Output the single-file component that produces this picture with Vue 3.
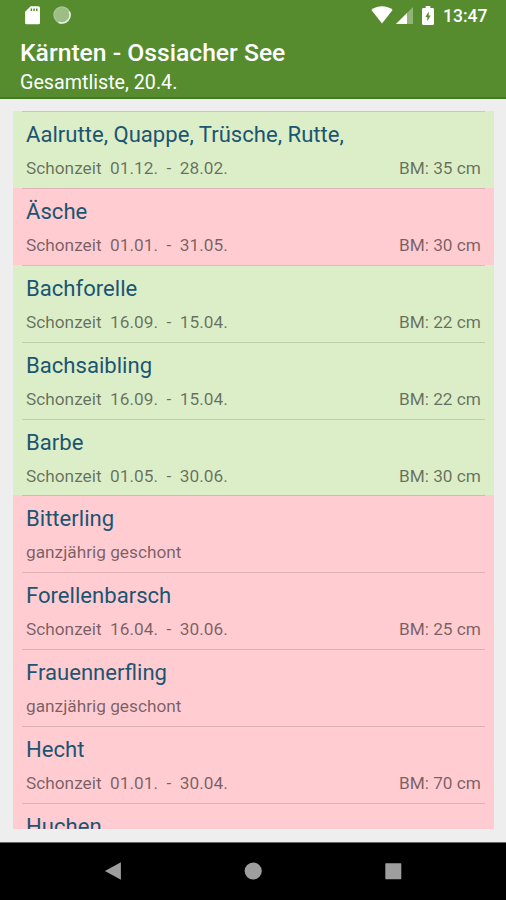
<script setup>
const fish = [
  { name: 'Aalrutte, Quappe, Trüsche, Rutte,', from: '01.12.', to: '28.02.', size: 35, open: true },
  { name: 'Äsche', from: '01.01.', to: '31.05.', size: 30, open: false },
  { name: 'Bachforelle', from: '16.09.', to: '15.04.', size: 22, open: true },
  { name: 'Bachsaibling', from: '16.09.', to: '15.04.', size: 22, open: true },
  { name: 'Barbe', from: '01.05.', to: '30.06.', size: 30, open: true },
  { name: 'Bitterling', note: 'ganzjährig geschont', open: false },
  { name: 'Forellenbarsch', from: '16.04.', to: '30.06.', size: 25, open: false },
  { name: 'Frauennerfling', note: 'ganzjährig geschont', open: false },
  { name: 'Hecht', from: '01.01.', to: '30.04.', size: 70, open: false },
  { name: 'Huchen', open: false },
]
</script>

<template>
  <div class="screen">
    <header class="top">
      <div class="status">
        <svg class="sd" width="15" height="19" viewBox="0 0 15 19">
          <path fill="#fff" fill-rule="evenodd" d="M5.6.3H13.4Q15 .3 15 1.9V16.7Q15 18.3 13.4 18.3H1.7Q.1 18.3 .1 16.7V5.8ZM5.6 2.600V5H7.1V2.600ZM8.3 2.600V5H9.8V2.600ZM11 2.600V5H12.5V2.600Z" />
        </svg>
        <svg class="disc" width="18" height="18" viewBox="0 0 18 18">
          <circle cx="9" cy="9" r="8" fill="#9cbd83" stroke="#a9c695" stroke-width="1.4" />
          <path d="M16.2 5.6A8 8 0 0 1 5.6 16.2" fill="none" stroke="#e6efdf" stroke-width="1.6" />
        </svg>
        <span class="gap"></span>
        <svg class="wifi" width="22" height="18" viewBox="0 0 22 18">
          <path fill="#fff" d="M11 17.4L.4 3.9C3.2 1.5 7 .2 11 .2S18.8 1.5 21.6 3.9Z" />
        </svg>
        <svg class="cell" width="18" height="17" viewBox="0 0 18 17">
          <path fill="#fff" fill-opacity=".35" d="M17 0V17H0Z" />
          <path fill="#fff" d="M11 6V17H0Z" />
        </svg>
        <svg class="battery" width="12" height="19" viewBox="0 0 12 19">
          <path fill="#fff" fill-rule="evenodd" d="M3.7 0H8.3V2H10.6Q12 2 12 3.4V17.5Q12 19 10.6 19H1.4Q0 19 0 17.5V3.4Q0 2 1.4 2H3.7ZM6.7 5.5L3.4 11.1H5.3V15.2L8.6 9.6H6.7Z" />
        </svg>
        <span class="clock">13:47</span>
      </div>
      <h1>Kärnten - Ossiacher See</h1>
      <p class="subtitle">Gesamtliste, 20.4.</p>
    </header>

    <main>
      <ul class="list">
        <li v-for="f in fish" :key="f.name" :class="f.open ? 'open' : 'closed'">
          <div class="inner">
            <div class="name">{{ f.name }}</div>
            <div v-if="f.from || f.note" class="info">
              <span v-if="f.from">Schonzeit&nbsp; {{ f.from }}&nbsp; -&nbsp; {{ f.to }}</span>
              <span v-else>{{ f.note }}</span>
              <span v-if="f.size">BM: {{ f.size }} cm</span>
            </div>
          </div>
        </li>
      </ul>
    </main>

    <nav>
      <svg width="18" height="18" viewBox="0 0 18 18"><path d="M.9 9L16.9 .3V17.7Z" /></svg>
      <svg width="18" height="18" viewBox="0 0 18 18"><circle cx="9.2" cy="9" r="8.6" /></svg>
      <svg width="18" height="18" viewBox="0 0 18 18"><rect x="1.3" y="1.2" width="16" height="16" rx=".6" /></svg>
    </nav>
  </div>
</template>

<style>
body {
  margin: 0;
}
</style>

<style scoped>
.screen {
  width: 506px;
  height: 900px;
  display: flex;
  flex-direction: column;
  overflow: hidden;
  background: #eeeeee;
  font-family: Roboto, "Liberation Sans", sans-serif;
}
.top {
  box-sizing: border-box;
  flex: none;
  height: 99px;
  background: #568c2e;
  border-bottom: 2px solid #3f7d1c;
  color: #fff;
}
.status {
  box-sizing: border-box;
  height: 32px;
  display: flex;
  align-items: flex-start;
  padding: 6px 0 0 25px;
}
.status svg {
  display: block;
  flex: none;
}
.disc {
  margin-left: 13px;
}
.gap {
  flex: 1;
}
.wifi {
  margin-right: 3px;
}
.cell {
  margin: 1px 8px 0 0;
}
.clock {
  width: 45px;
  margin: -1px 18px 0 9px;
  font-size: 17.5px;
  font-weight: 500;
  line-height: 22px;
  white-space: nowrap;
}
h1 {
  margin: 6px 0 0 20px;
  font-size: 24.7px;
  font-weight: 500;
  line-height: 30px;
  white-space: nowrap;
}
.subtitle {
  margin: 2px 0 0 20px;
  font-size: 19.7px;
  line-height: 25px;
}
main {
  box-sizing: border-box;
  flex: none;
  height: 743px;
  padding: 12px 12px 13px 13px;
}
.list {
  height: 718px;
  margin: 0;
  padding: 0;
  overflow: hidden;
  list-style: none;
}
li {
  box-sizing: border-box;
  height: 76.88px;
  padding: 0 9px 0 9px;
}
.open {
  background: #dbeec8;
}
.closed {
  background: #ffccd2;
}
.inner {
  border-top: 1px solid rgba(0, 0, 0, 0.13);
  padding: 8px 4px 0 4px;
}
.name {
  color: #1b5571;
  font-size: 22.1px;
  line-height: 28px;
  white-space: nowrap;
}
.info {
  display: flex;
  justify-content: space-between;
  margin-top: 9px;
  color: rgba(0, 0, 0, 0.54);
  font-size: 17.25px;
  line-height: 22px;
  white-space: nowrap;
}
nav {
  box-sizing: border-box;
  flex: none;
  height: 58px;
  display: flex;
  align-items: center;
  justify-content: center;
  gap: 122px;
  padding-bottom: 2px;
  background: #000;
  border-top: 1px solid #666;
}
nav svg {
  fill: #9e9e9e;
}
</style>
